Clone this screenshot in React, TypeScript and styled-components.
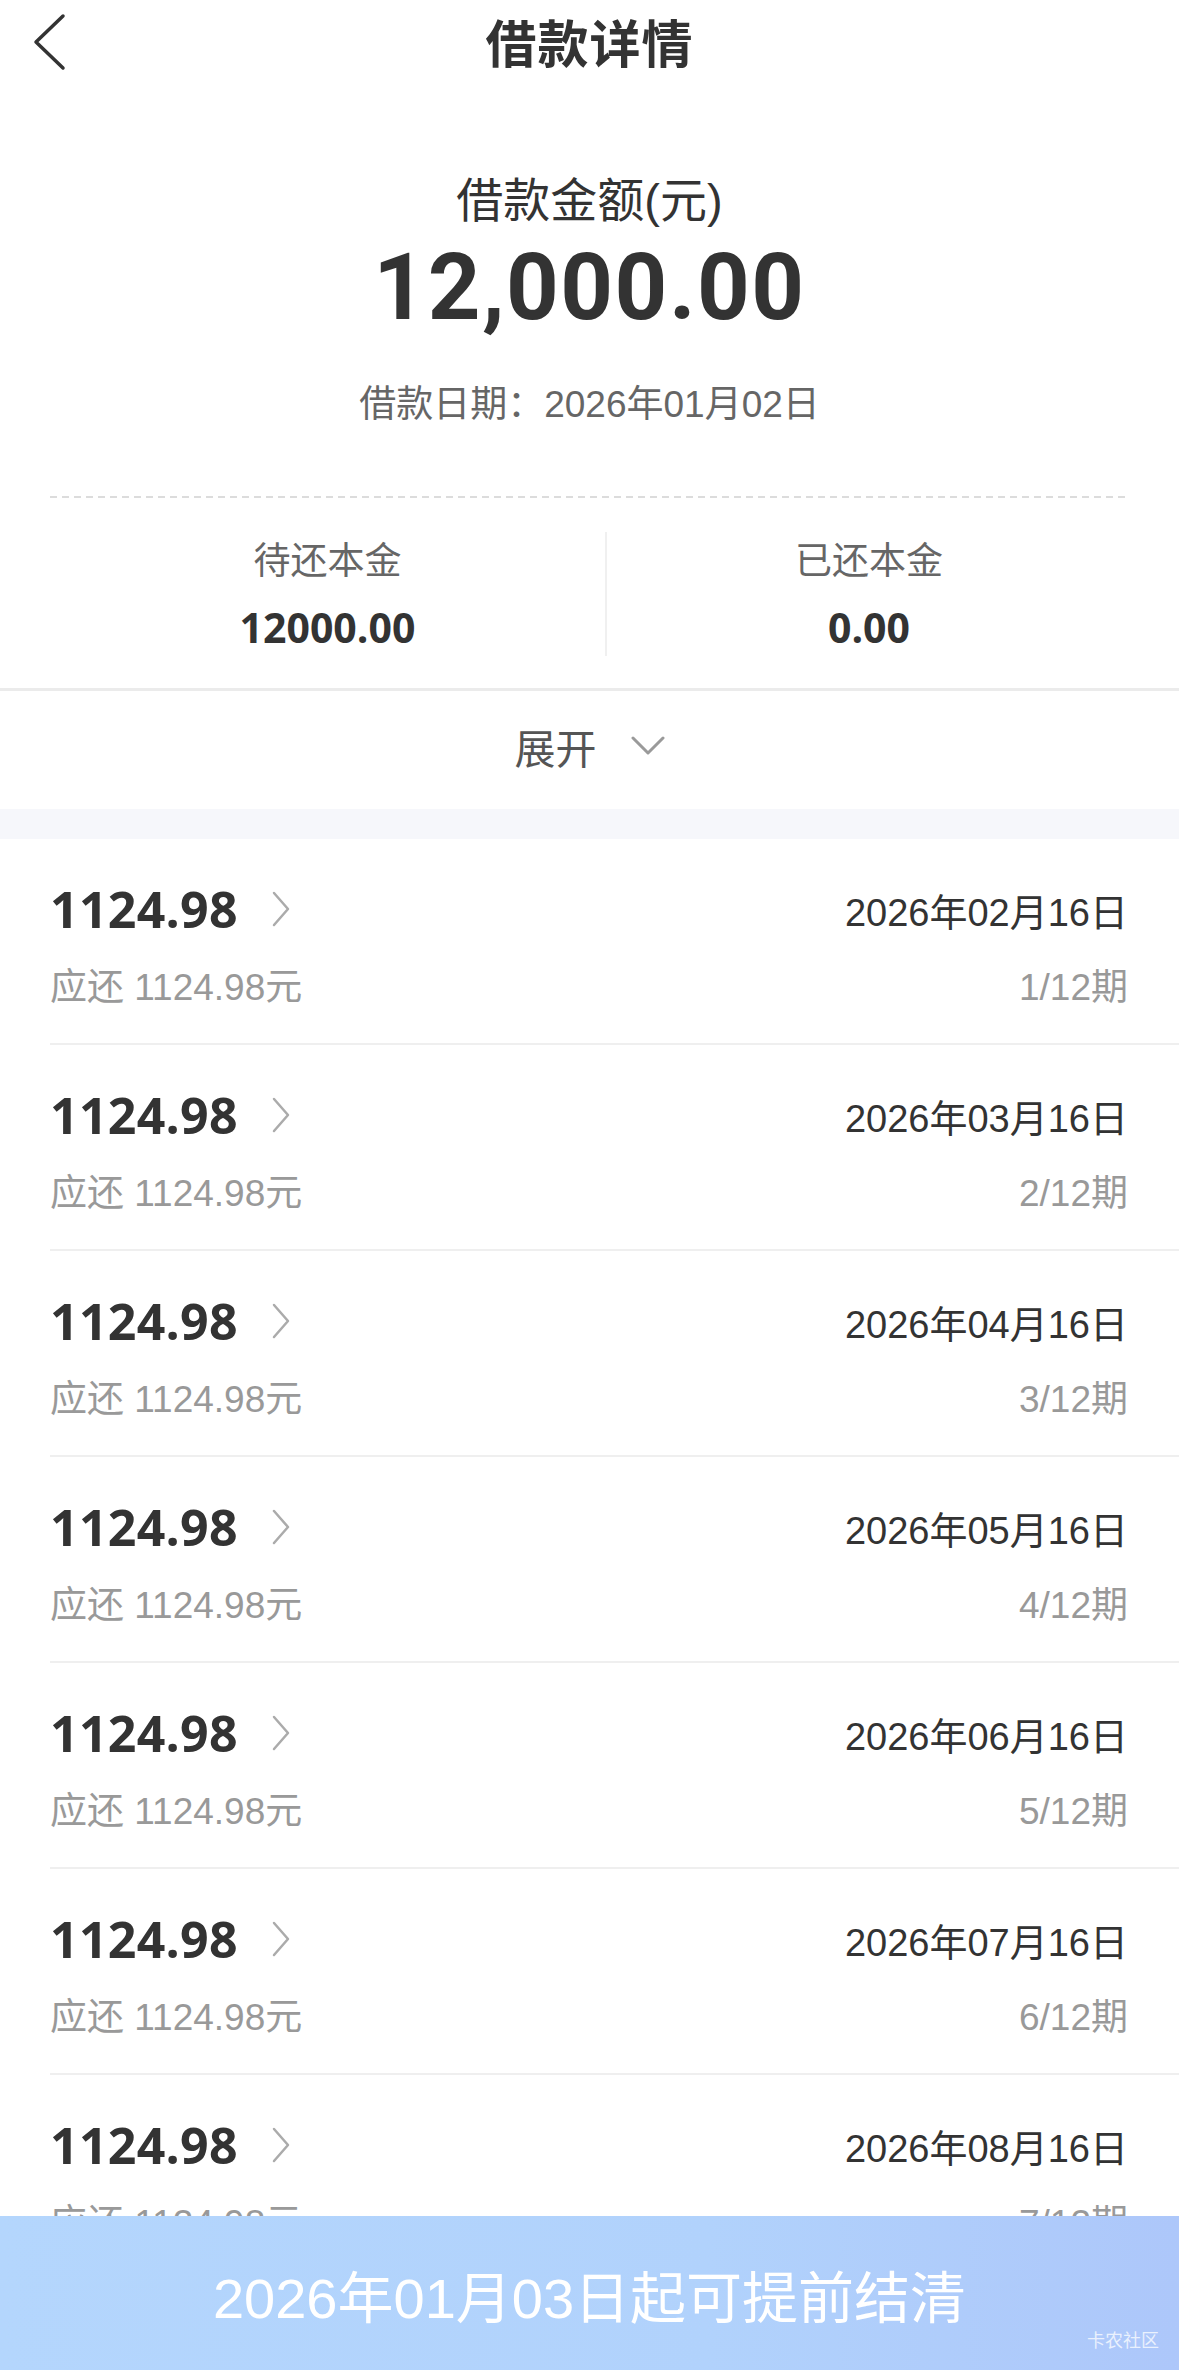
import React from 'react';

import styled, { createGlobalStyle } from 'styled-components';

const GlobalStyle = createGlobalStyle`
  body {
    margin: 0;
    background: #fff;
    font-family: "Liberation Sans", "Noto Sans CJK SC", sans-serif;
    color: #333;
  }
`;

const Page = styled.div`
  position: relative;
  width: 1179px;
  height: 2370px;
  overflow: hidden;
  background: #fff;
`;

const NavBar = styled.div`
  display: grid;
  grid-template-columns: 1fr auto 1fr;
  align-items: center;
  height: 82px;
`;

const BackButton = styled.div`
  display: flex;
  align-items: center;
  padding-left: 32px;
`;

const Title = styled.div`
  font-size: 51px;
  font-weight: 600;
  color: #333;
  letter-spacing: 1px;
`;

const Summary = styled.div`
  display: flex;
  flex-direction: column;
  align-items: center;
  padding-top: 89px;
`;

const AmountLabel = styled.div`
  font-size: 47px;
  line-height: 60px;
  color: #333;
`;

const BigAmount = styled.div`
  margin-top: 2px;
  font-family: Roboto, "Liberation Sans", sans-serif;
  font-size: 92px;
  line-height: 110px;
  font-weight: 700;
  color: #333;
  letter-spacing: 1.5px;
`;

const LoanDate = styled.div`
  margin-top: 37px;
  font-size: 37px;
  line-height: 50px;
  color: #666;
`;

const Dashed = styled.div`
  margin: 66px 51px 0 50px;
  height: 2px;
  background: repeating-linear-gradient(90deg, #dcdcdc 0 7px, transparent 7px 12px);
`;

const Stats = styled.div`
  display: grid;
  grid-template-columns: 555px 2px 1fr;
  padding: 34px 48px 32px 50px;
`;

const StatCol = styled.div`
  display: flex;
  flex-direction: column;
  align-items: center;
  justify-content: center;
  gap: 15px;
`;

const StatLabel = styled.div`
  font-size: 37px;
  line-height: 50px;
  color: #666;
`;

const StatValue = styled.div`
  font-family: "Open Sans", "Liberation Sans", sans-serif;
  font-size: 41px;
  line-height: 50px;
  font-weight: 700;
  color: #333;
`;

const VDivider = styled.div`
  width: 2px;
  height: 124px;
  background: #f0f0f0;
`;

const ExpandBar = styled.div`
  display: flex;
  align-items: center;
  justify-content: center;
  gap: 34px;
  height: 121px;
  padding-bottom: 8px;
  box-sizing: border-box;
  border-top: 3px solid #ebebeb;
  font-size: 41px;
  color: #555;
`;

const Band = styled.div`
  height: 30px;
  background: #f6f7fb;
`;

const Row = styled.div`
  margin-left: 50px;
  padding: 40px 51px 34px 0;
  border-bottom: 2px solid #efefef;
  display: flex;
  flex-direction: column;
  gap: 20px;
`;

const Line = styled.div<{ $h: number }>`
  display: flex;
  align-items: center;
  justify-content: space-between;
  height: ${(p) => p.$h}px;
`;

const AmountWrap = styled.div`
  display: flex;
  align-items: center;
  gap: 33px;
`;

const RowAmount = styled.div`
  font-family: "Open Sans", "Liberation Sans", sans-serif;
  font-size: 50px;
  font-weight: 700;
  color: #333;
  letter-spacing: 0.3px;
`;

const RowDate = styled.div`
  font-size: 38px;
  color: #333;
`;

const SubText = styled.div`
  font-size: 37px;
  color: #999;
`;

const BottomBar = styled.div`
  position: absolute;
  left: 0;
  right: 0;
  bottom: 0;
  height: 154px;
  display: flex;
  align-items: center;
  justify-content: center;
  background: linear-gradient(90deg, #b4d6fd 0%, #b1d2fc 60%, #adc7fa 100%);
  color: #fff;
  font-size: 56px;
`;

const Watermark = styled.div`
  position: absolute;
  right: 20px;
  bottom: 18px;
  font-size: 18px;
  color: rgba(255, 255, 255, 0.75);
`;

const periods = ['02', '03', '04', '05', '06', '07', '08', '09', '10', '11', '12'];

const App = () => {
  return (
    <Page>
      <GlobalStyle />
      <NavBar>
        <BackButton>
          <svg width="40" height="60" viewBox="0 0 40 60">
            <polyline points="31,5 4,31 31,57" fill="none" stroke="#333" strokeWidth="3.5" strokeLinecap="round" strokeLinejoin="round" />
          </svg>
        </BackButton>
        <Title>借款详情</Title>
        <div />
      </NavBar>

      <Summary>
        <AmountLabel>借款金额(元)</AmountLabel>
        <BigAmount>12,000.00</BigAmount>
        <LoanDate>借款日期：2026年01月02日</LoanDate>
      </Summary>

      <Dashed />

      <Stats>
        <StatCol>
          <StatLabel>待还本金</StatLabel>
          <StatValue>12000.00</StatValue>
        </StatCol>
        <VDivider />
        <StatCol>
          <StatLabel>已还本金</StatLabel>
          <StatValue>0.00</StatValue>
        </StatCol>
      </Stats>

      <ExpandBar>
        <span>展开</span>
        <svg width="34" height="20" viewBox="0 0 34 20">
          <polyline points="2,2 17,17 32,2" fill="none" stroke="#9a9a9a" strokeWidth="3" strokeLinecap="round" strokeLinejoin="round" />
        </svg>
      </ExpandBar>

      <Band />

      {periods.map((m, i) => (
        <Row key={m}>
          <Line $h={60}>
            <AmountWrap>
              <RowAmount>1124.98</RowAmount>
              <svg width="20" height="36" viewBox="0 0 20 36">
                <polyline points="3,2 17,18 3,34" fill="none" stroke="#ababab" strokeWidth="2.5" strokeLinecap="round" strokeLinejoin="round" />
              </svg>
            </AmountWrap>
            <RowDate>2026年{m}月16日</RowDate>
          </Line>
          <Line $h={50}>
            <SubText>应还 1124.98元</SubText>
            <SubText>{i + 1}/12期</SubText>
          </Line>
        </Row>
      ))}

      <BottomBar>
        2026年01月03日起可提前结清
        <Watermark>卡农社区</Watermark>
      </BottomBar>
    </Page>
  );
};

export default App;
